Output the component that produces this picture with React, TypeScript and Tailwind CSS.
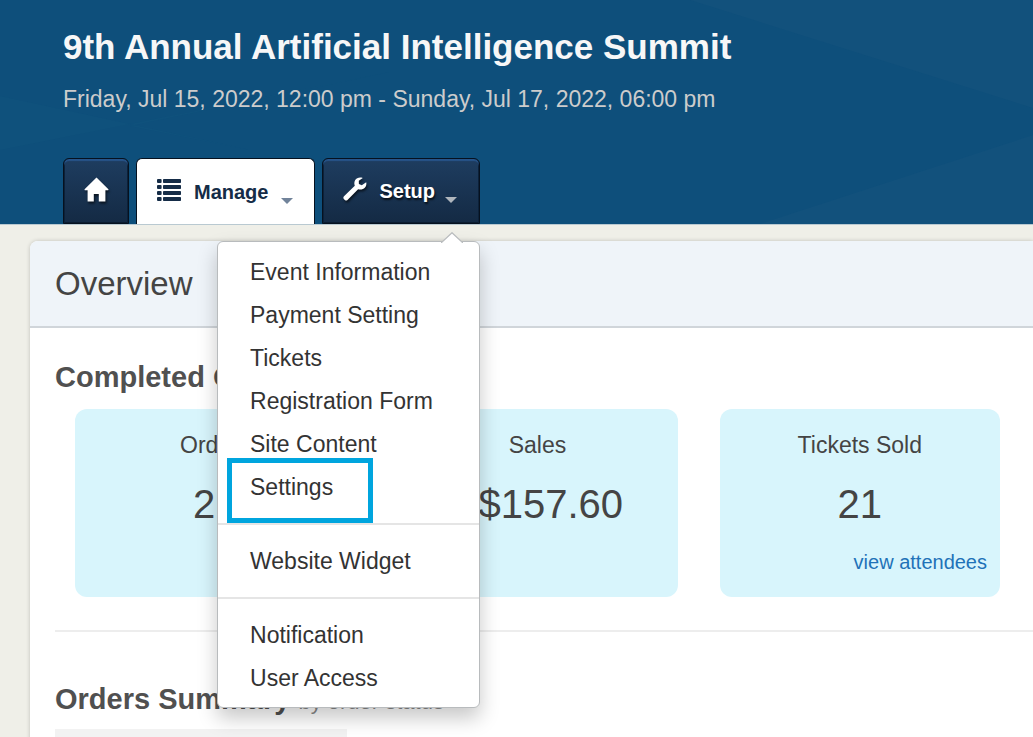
import React from "react";

const HomeIcon = () => (
  <svg width="25" height="26" viewBox="0 0 25 26" fill="currentColor" aria-hidden="true" className="mb-0.5 drop-shadow-[1px_2px_1px_rgba(0,0,0,0.6)]">
    <path d="M12.5 0.5 L24.4 12.2 Q24.8 13.2 24 13.2 H21.4 V24.6 H14.8 V17 H9.8 V24.6 H3.6 V13.2 H1 Q0.2 13.2 0.6 12.2 Z" />
  </svg>
);

const ListIcon = () => (
  <svg width="24" height="22" viewBox="0 0 24 22" fill="currentColor" aria-hidden="true" className="mb-1">
    {[0, 6, 12, 18].map((y) => (
      <g key={y}>
        <rect x="0" y={y} width="4.6" height="4" rx="1" />
        <rect x="6" y={y} width="18" height="4" rx="0.8" />
      </g>
    ))}
  </svg>
);

const WrenchIcon = () => (
  <svg width="24" height="24" viewBox="0 0 24 24" fill="currentColor" aria-hidden="true" className="mb-1 drop-shadow-[1px_2px_1px_rgba(0,0,0,0.6)]">
    <path d="M19.8 0.9 C16.8 -0.2 13.6 0.6 12.1 3.2 C11.1 5 11.1 6.8 11.8 8.8 L1 19.3 C0.1 20.2 0.2 21.2 0.9 22 L1.8 22.9 C2.7 23.7 3.7 23.7 4.5 22.9 L15.1 12.3 C17.8 13 20.3 12.4 22 10.5 C23.3 9 23.6 7 23.2 5.3 L18.8 8.3 L15.9 6.9 L15.8 3.7 Z" />
  </svg>
);

const Caret = ({ className }: { className: string }) => (
  <svg width="12" height="6" viewBox="0 0 12 6" fill="currentColor" aria-hidden="true" className={className}>
    <path d="M0 0 H12 L6 6 Z" />
  </svg>
);

const darkTab =
  "rounded-t-md border border-[#06111f] bg-linear-to-b from-[#1e3d60] to-[#142a44] text-white shadow-[inset_0_2px_1px_#27548a,inset_0_0_0_1px_#0b1c30]";

const menuGroups = [
  ["Event Information", "Payment Setting", "Tickets", "Registration Form", "Site Content", "Settings"],
  ["Website Widget"],
  ["Notification", "User Access"],
];

const stats = [
  { label: "Orders", value: "21" },
  { label: "Sales", value: "A$157.60" },
  { label: "Tickets Sold", value: "21", link: "view attendees" },
];

function SetupMenu() {
  return (
    <div className="absolute top-full right-0 z-10 mt-[17px] w-[263px] rounded-md border border-[#b8bbbd] bg-white pt-[9px] pb-[7px] text-[23px] leading-[43px] font-normal text-[#333] shadow-[0_10px_20px_rgba(0,0,0,0.22)]">
      <svg width="22" height="11" viewBox="0 0 22 11" aria-hidden="true" className="absolute right-4 bottom-full -mb-px">
        <path d="M0 11 L11 0.7 L22 11" fill="#fff" stroke="#b8bbbd" strokeWidth="1.2" />
      </svg>
      {menuGroups.map((group, index) => (
        <ul key={group[0]} className={index > 0 ? "mt-[14px] border-t-2 border-[#e5e5e5] pt-[15px]" : ""}>
          {group.map((item) => (
            <li key={item} className="relative">
              <a href="#" className="block px-8 whitespace-nowrap">
                {item}
              </a>
              {item === "Settings" && (
                <span className="pointer-events-none absolute -top-2 left-[9px] h-[65px] w-[146px] border-5 border-[#00a5de]" />
              )}
            </li>
          ))}
        </ul>
      ))}
    </div>
  );
}

export default function App() {
  return (
    <div className="min-h-screen overflow-hidden bg-[#efefe8] font-['Liberation_Sans',Arial,sans-serif] text-[#444]">
      <header className="relative border-b border-[#b9c9d1] bg-[#0e4f7b] pl-[63px]">
        <svg className="absolute inset-0 h-full w-full" viewBox="0 0 1033 224" preserveAspectRatio="none" aria-hidden="true">
          <path d="M690 0 H1033 V108 Z M760 224 L1033 135 V224 Z" fill="#12517c" />
          <path d="M0 150 L390 72 L130 126 L250 150 L0 96 Z" fill="#0f517c" />
        </svg>
        <div className="relative">
          <h1 className="pt-[27px] text-[35px] leading-[40px] font-bold whitespace-nowrap text-[#f7f7f7]">
            9th Annual Artificial Intelligence Summit
          </h1>
          <p className="pt-[17px] text-[23px] leading-[30px] whitespace-nowrap text-[#ccc]">
            Friday, Jul 15, 2022, 12:00 pm - Sunday, Jul 17, 2022, 06:00 pm
          </p>
          <nav className="mt-11 flex gap-[7px] text-xl font-bold">
            <button aria-label="Home" className={`flex h-[66px] w-[66px] items-center justify-center ${darkTab}`}>
              <HomeIcon />
            </button>
            <button className="flex h-[66px] items-center rounded-t-md border border-b-0 border-[#06111f] bg-white pr-[21px] pl-5 text-[#152c47]">
              <ListIcon />
              <span className="ml-[13px]">Manage</span>
              <Caret className="mt-[18px] ml-[13px] text-[#71839a]" />
            </button>
            <div className="relative">
              <button className={`flex h-[66px] items-center pr-[22px] pl-5 ${darkTab}`} aria-expanded="true">
                <WrenchIcon />
                <span className="ml-3 text-shadow-[1px_2px_2px_rgba(0,0,0,0.7)]">Setup</span>
                <Caret className="mt-[18px] ml-2.5 text-[#b0b6bd]" />
              </button>
              <SetupMenu />
            </div>
          </nav>
        </div>
      </header>

      <main className="mt-4 ml-[30px] rounded-tl-lg bg-white shadow-[0_0_4px_rgba(0,0,0,0.2)]">
        <div className="rounded-tl-lg border-b-2 border-[#d0d5da] bg-[#eff4f9] px-[25px] pt-[23px] pb-[22px]">
          <h2 className="text-[33px] leading-[40px]">Overview</h2>
        </div>
        <section className="pl-[25px]">
          <h3 className="pt-[33px] text-[29px] leading-[32px] font-bold text-[#505050]">Completed Orders</h3>
          <div className="mt-4 grid grid-cols-3 gap-[42px] pr-[33px] pl-5">
            {stats.map((stat) => (
              <div key={stat.label} className="h-[188px] rounded-xl bg-[#d8f5fc] px-[13px] pt-5 text-center">
                <p className="text-[23px] leading-[32px]">{stat.label}</p>
                <p className="pt-[18px] text-[40px] leading-[50px]">{stat.value}</p>
                {stat.link && (
                  <p className="pt-5 text-right text-xl leading-[26px]">
                    <a href="#" className="text-[#1f72b8]">
                      {stat.link}
                    </a>
                  </p>
                )}
              </div>
            ))}
          </div>
        </section>
        <section className="mt-[33px] ml-[25px] border-t-2 border-[#ededed] pt-[50px]">
          <h3 className="text-[29px] leading-[34px] font-bold text-[#505050]">
            Orders Summary <small className="text-[22px] font-normal text-[#888]">by order status</small>
          </h3>
          <div className="mt-[10px] h-10 w-[292px] bg-[#f2f2f2]" />
        </section>
      </main>
    </div>
  );
}
